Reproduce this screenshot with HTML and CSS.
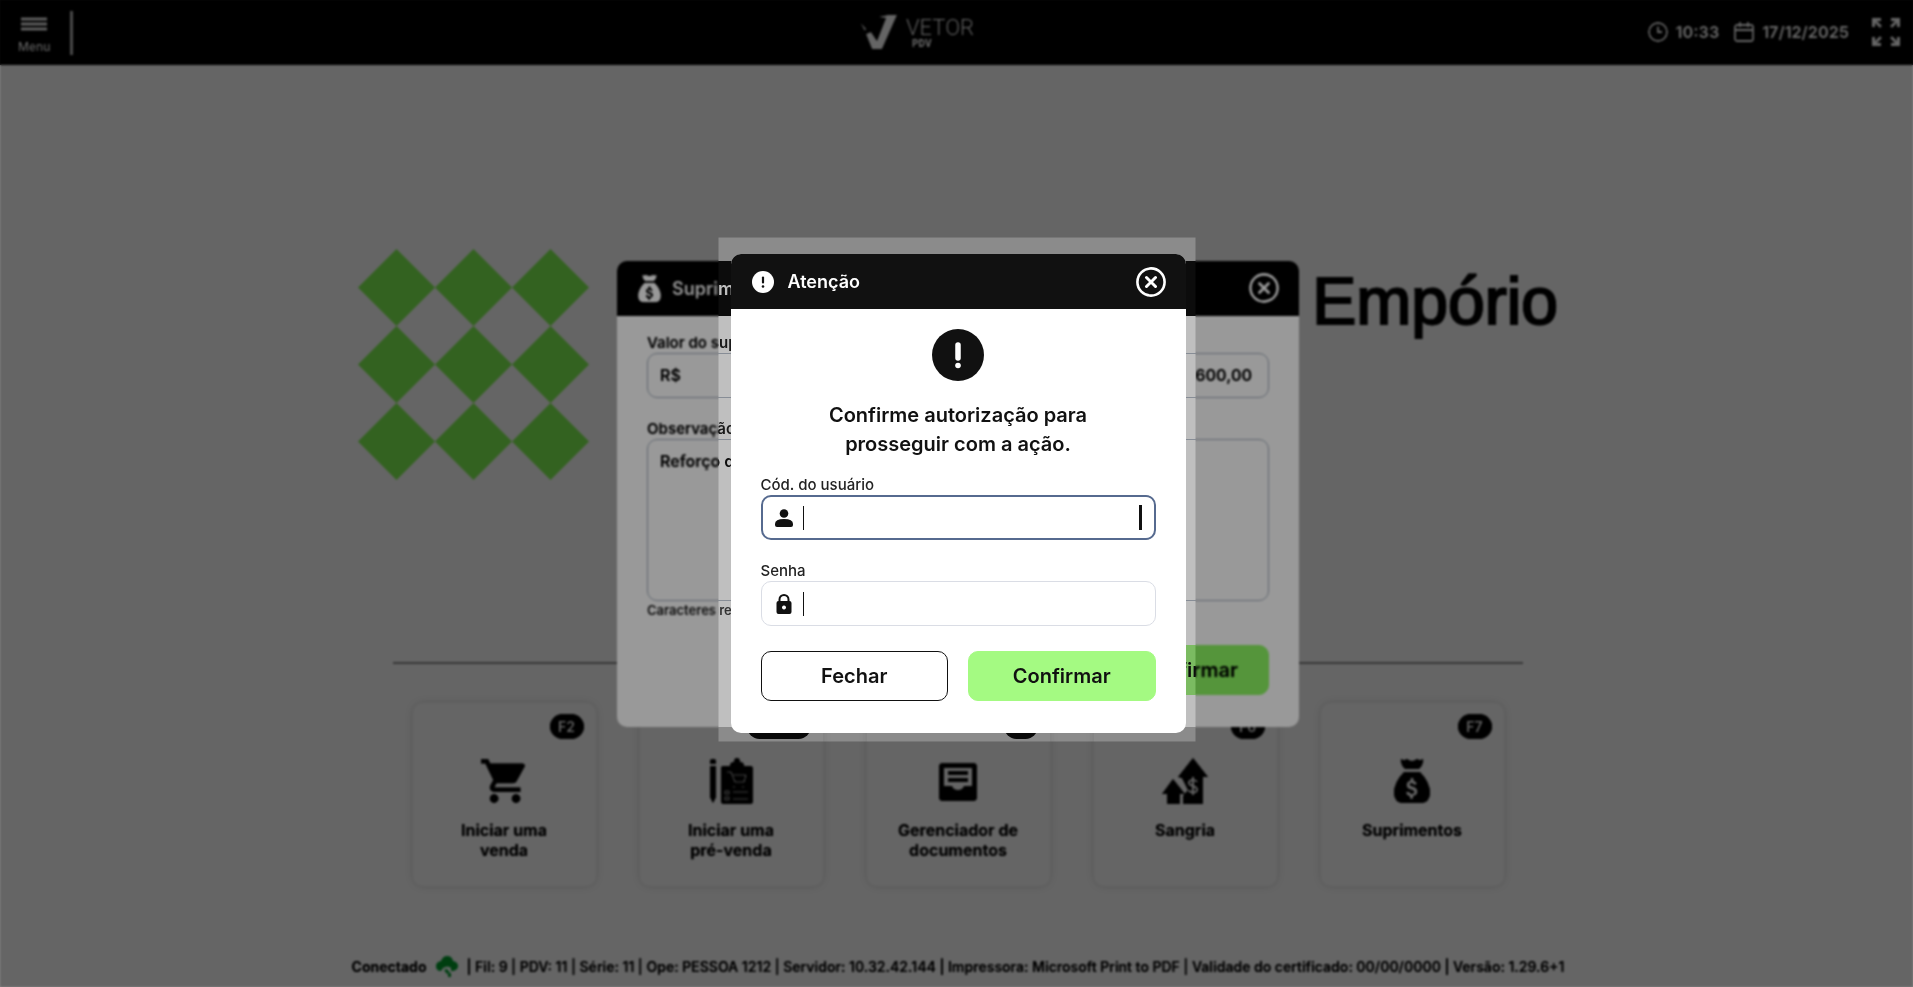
FILE: index.html
```html
<!DOCTYPE html>
<html lang="pt-BR">
<head>
	<meta charset="utf-8">
	<title>Vetor PDV</title>
	<link rel="stylesheet" href="styles.css">
</head>
<body>
	<svg class="sprite" aria-hidden="true">
		<symbol id="money-bag" viewBox="0 0 36 46">
			<path d="M7 1q3 2 6 0 5 4 10 0 3 2 6 0 1 5-4 10H11Q6 6 7 1z"/>
			<path fill-rule="evenodd" d="M10 14h16q10 10 10 21 0 10-10 10H10Q0 45 0 35q0-11 10-21zm6.500 6v2.500q-4 1-4 4.500 0 3.500 5 4.700 3 .8 3 2.300 0 1.800-2.500 1.800-2.600 0-3-2.300l-3 .8q.6 3.300 4 4v2.500h3V38q4.500-.8 4.500-4.500 0-3.600-5-4.900-3-.8-3-2 0-1.400 2-1.400 2.200 0 2.800 1.800l2.800-1q-.9-2.800-3.600-3.500V20z"/>
		</symbol>
		<symbol id="close" viewBox="0 0 30 30">
			<circle cx="15" cy="15" r="13.600" fill="none" stroke="currentColor" stroke-width="2.600"/>
			<path d="M10.500 10.500l9 9m0-9l-9 9" fill="none" stroke="currentColor" stroke-width="3" stroke-linecap="round"/>
		</symbol>
	</svg>

	<header class="topbar">
		<div class="topbar-left">
			<button type="button" class="menu">
				<svg width="28" height="16" viewBox="0 0 28 16"><path d="M1 3h26M1 8h26M1 13h26" stroke="currentColor" stroke-width="3"/></svg>
				Menu
			</button>
			<span class="divider"></span>
		</div>
		<div class="logo">
			<svg width="38" height="36" viewBox="0 0 38 36" fill="currentColor"><path d="M0 8l6 7-1 2zM6 20l5-2 6 9L26 4l-8-1 10-2h9L22 35H12z"/></svg>
			<div class="logo-text">
				<span class="logo-name">VETOR</span>
				<span class="logo-sub">PDV</span>
			</div>
		</div>
		<div class="topbar-right">
			<svg width="20" height="20" viewBox="0 0 20 20" fill="none" stroke="currentColor" stroke-width="1.800"><circle cx="10" cy="10" r="9"/><path d="M10 4.500V10h4"/></svg>
			<time class="clock">10:33</time>
			<svg width="20" height="20" viewBox="0 0 20 20" fill="none" stroke="currentColor" stroke-width="1.800"><rect x="1" y="3" width="18" height="16" rx="2"/><path d="M1 8h18M6 0v5M14 0v5"/></svg>
			<time class="date">17/12/2025</time>
			<button type="button" class="expand" aria-label="Tela cheia">
				<svg width="28" height="28" viewBox="0 0 28 28" fill="none" stroke="currentColor" stroke-width="3"><path d="M1.500 9V1.500H9M2 2l7 7M19 1.500h7.500V9M26 2l-7 7M1.500 19v7.500H9M2 26l7-7M26.500 19v7.500H19M26 26l-7-7"/></svg>
			</button>
		</div>
	</header>

	<main class="home">
		<div class="company">
			<svg class="company-logo" viewBox="0 0 6 6"><path d="M1 0l1 1-1 1-1-1zM3 0l1 1-1 1-1-1zM5 0l1 1-1 1-1-1zM1 2l1 1-1 1-1-1zM3 2l1 1-1 1-1-1zM5 2l1 1-1 1-1-1zM1 4l1 1-1 1-1-1zM3 4l1 1-1 1-1-1zM5 4l1 1-1 1-1-1z"/></svg>
			<h1 class="company-name">Empório</h1>
		</div>
		<hr class="line">
		<nav class="cards">
			<button type="button" class="card">
				<kbd class="key">F2</kbd>
				<svg class="card-icon" width="46" height="46" viewBox="1 2 21 20"><path d="M7 18c-1.100 0-1.990.9-1.990 2S5.900 22 7 22s2-.9 2-2-.9-2-2-2zM1 2v2h2l3.600 7.590-1.350 2.450c-.16.280-.25.610-.25.960 0 1.100.9 2 2 2h12v-2H7.420c-.14 0-.25-.11-.25-.25l.03-.12.9-1.630h7.450c.75 0 1.410-.41 1.750-1.030l3.580-6.490c.08-.14.12-.31.120-.480 0-.55-.45-1-1-1H5.210l-.94-2H1zm16 16c-1.100 0-1.990.9-1.990 2s.89 2 1.990 2 2-.9 2-2-.9-2-2-2z"/></svg>
				<span>Iniciar uma<br>venda</span>
			</button>
			<button type="button" class="card">
				<kbd class="key key-wide">Alt+F2</kbd>
				<svg class="card-icon" width="46" height="46" viewBox="0 0 44 46">
					<path d="M1 6V3q0-2 3-2t3 2v3zM1 8h6v31l-3 6-3-6zM14 8h7q0-4 4-4 0-4 3-4t3 4q4 0 4 4h6q3 0 3 3v32q0 3-3 3H15q-3 0-3-3V11q0-3 2-3z"/>
					<path class="card-icon-cut thin" d="M18 14h4l4 10h9l2-7H24M25 28v2M34 28v2M16 33h4v3h-4zM16 39h4v3h-4zM24 34h15M24 41h15"/>
				</svg>
				<span>Iniciar uma<br>pré-venda</span>
			</button>
			<button type="button" class="card">
				<kbd class="key">F4</kbd>
				<svg class="card-icon" width="38" height="46" viewBox="0 -5 38 46">
					<path fill-rule="evenodd" d="M4 0h30q4 0 4 4v30q0 4-4 4H4q-4 0-4-4V4q0-4 4-4zm1 5v18h8q1 4 6 4t6-4h8V5zM9 8h20v4H9zM9 15h20v4H9z"/>
				</svg>
				<span>Gerenciador de<br>documentos</span>
			</button>
			<button type="button" class="card">
				<kbd class="key">F6</kbd>
				<svg class="card-icon" width="46" height="46" viewBox="0 0 46 46">
					<path d="M31 0l15 19h-5v27H21v-8l5-6-6-12-4-1zM11 21l12 15h-5v10H5V36H0z"/>
					<path class="card-icon-cut" d="M35 24q-1-2-4-2-4 0-4 3 0 2 4 3t4 3.500q0 3-4 3-3 0-4.500-2.500M31 19v18"/>
				</svg>
				<span>Sangria</span>
			</button>
			<button type="button" class="card">
				<kbd class="key">F7</kbd>
				<svg class="card-icon" width="36" height="46"><use href="#money-bag"/></svg>
				<span>Suprimentos</span>
			</button>
		</nav>
	</main>

	<footer class="status">
		<span>Conectado</span>
		<svg width="22" height="22" viewBox="0 0 22 22"><path fill-rule="evenodd" d="M5 16q-5 0-5-5 0-4 5-5 2-5 6-5 5 0 6 5 5 1 5 5t-5 5h-2v-3q-3-3-8 0zM8 15l3-1 3 4-3 1zM12 18h3v4h-3z"/></svg>
		<span>| Fil: 9 | PDV: 11 | Série: 11 | Ope: PESSOA 1212 | Servidor: 10.32.42.144 | Impressora: Microsoft Print to PDF | Validade do certificado: 00/00/0000 | Versão: 1.29.6+1</span>
	</footer>

	<div class="overlay overlay-page">
		<form class="dialog supply">
			<div class="dialog-header">
				<svg class="bag" width="23" height="29"><use href="#money-bag"/></svg>
				<h2>Suprimento</h2>
				<button type="button" class="close" aria-label="Fechar suprimento"><svg width="30" height="30"><use href="#close"/></svg></button>
			</div>
			<div class="dialog-body">
				<label for="amount">Valor do suprimento</label>
				<div class="field money">
					<span>R$</span>
					<input id="amount" type="text" value="600,00">
				</div>
				<label for="note">Observação</label>
				<textarea id="note" class="note">Reforço de caixa</textarea>
				<small class="hint">Caracteres restantes</small>
				<button type="button" class="btn btn-confirm supply-confirm">Confirmar</button>
			</div>
		</form>
	</div>

	<div class="overlay overlay-dialog"></div>
	<div class="overlay overlay-blur"></div>

	<div class="overlay">
		<form class="dialog auth">
			<div class="dialog-header">
				<svg width="22" height="22" viewBox="0 0 22 22"><circle cx="11" cy="11" r="11" fill="#fff"/><path d="M11 6.500v5" stroke="#111" stroke-width="2.200" stroke-linecap="round"/><circle cx="11" cy="15.500" r="1.300" fill="#111"/></svg>
				<h2>Atenção</h2>
				<button type="button" class="close" aria-label="Fechar aviso"><svg width="30" height="30"><use href="#close"/></svg></button>
			</div>
			<div class="dialog-body">
				<svg class="alert" width="52" height="52" viewBox="0 0 52 52"><circle cx="26" cy="26" r="26" fill="#111"/><path d="M26 16v13" stroke="#fff" stroke-width="5.500" stroke-linecap="round"/><circle cx="26" cy="36.500" r="2.800" fill="#fff"/></svg>
				<p class="message">Confirme autorização para prosseguir com a ação.</p>
				<label for="user">Cód. do usuário</label>
				<div class="field focused">
					<svg width="18" height="18" viewBox="0 0 18 18" fill="#111"><circle cx="9" cy="4.500" r="4.300"/><path d="M0 15q0-5 9-5t9 5v1q0 2-2 2H2q-2 0-2-2z"/></svg>
					<span class="bar"></span>
					<input id="user" type="text">
					<span class="caret"></span>
				</div>
				<label for="password">Senha</label>
				<div class="field">
					<svg width="18" height="20" viewBox="0 0 18 20" fill="#111"><path fill-rule="evenodd" d="M3.500 7V5.500a5.500 5.500 0 0 1 11 0V7q2 0 2 2v9q0 2-2 2h-11q-2 0-2-2V9q0-2 2-2zm2 0h7V5.500a3.500 3.500 0 0 0-7 0zM9 11.500a2 2 0 1 0 .01 0z"/></svg>
					<span class="bar"></span>
					<input id="password" type="password">
				</div>
				<div class="actions">
					<button type="button" class="btn">Fechar</button>
					<button type="submit" class="btn btn-confirm">Confirmar</button>
				</div>
			</div>
		</form>
	</div>
</body>
</html>
```
FILE: styles.css
```css
*{
	box-sizing: border-box;
}
body{
	margin: 0;
	min-height: 100vh;
	display: flex;
	flex-direction: column;
	overflow: hidden;
	font-family: Inter, "Liberation Sans", sans-serif;
	font-size: 16px;
	color: #111;
	background: #fff;
}
button, input, textarea{
	font: inherit;
	color: inherit;
	border: none;
	background: none;
	padding: 0;
}
button{
	cursor: pointer;
}
svg{
	display: block;
	flex: none;
}
.sprite{
	position: absolute;
	width: 0;
	height: 0;
}

/* top bar */
.topbar{
	height: 65px;
	display: grid;
	grid-template-columns: 1fr auto 1fr;
	align-items: center;
	padding: 0 13px 2px 18px;
	background: #111;
	color: #fff;
}
.topbar-left, .topbar-right{
	display: flex;
	align-items: center;
}
.topbar-left{
	gap: 20px;
	padding-top: 2px;
}
.menu{
	display: flex;
	flex-direction: column;
	align-items: center;
	gap: 8px;
	padding-top: 4px;
	font-size: 12px;
	line-height: 14px;
	font-weight: 500;
}
.divider{
	width: 3px;
	height: 44px;
	background: #ccc;
}
.logo{
	display: flex;
	gap: 8px;
	width: 198px;
}
.logo-text{
	display: flex;
	flex-direction: column;
	padding-top: 3px;
	font-family: Roboto, sans-serif;
}
.logo-name{
	font-size: 22px;
	line-height: 22px;
	font-weight: 300;
}
.logo-sub{
	padding-left: 6px;
	font-size: 10px;
	line-height: 10px;
	font-weight: 900;
}
.topbar-right{
	justify-content: flex-end;
	gap: 8px;
	font-weight: 700;
}
.clock{
	margin-right: 7px;
}
.expand{
	margin-left: 15px;
}

/* home */
.home{
	flex: 1;
	display: flex;
	flex-direction: column;
	align-items: center;
	padding: 184px 0 0 3px;
}
.company{
	display: flex;
	justify-content: space-between;
	width: 1200px;
	max-width: 100%;
}
.company-logo{
	width: 231px;
	height: 231px;
	fill: #a4fa82;
}
.company-name{
	margin: 12px 0 0;
	font-family: "Liberation Sans", Arial, sans-serif;
	font-size: 66px;
	line-height: 80px;
	font-weight: 400;
	-webkit-text-stroke: 2px #111;
}
.line{
	width: 1130px;
	max-width: 100%;
	height: 2px;
	margin: 182px 0 39px;
	border: none;
	background: #aaa;
}
.cards{
	display: flex;
	gap: 44px;
}
.card{
	position: relative;
	display: flex;
	flex-direction: column;
	align-items: center;
	gap: 16px;
	width: 183px;
	height: 183px;
	padding-top: 55px;
	border-radius: 10px;
	box-shadow: 0 0 10px -1px rgba(0,0,0,.15);
	font-weight: 700;
	line-height: 20px;
}
.card-icon-cut{
	fill: none;
	stroke: #fff;
	stroke-width: 2;
}
.thin{
	stroke-width: 1;
}
.key{
	position: absolute;
	top: 11px;
	right: 12px;
	width: 34px;
	border-radius: 13px;
	background: #111;
	color: #fff;
	font-family: inherit;
	font-size: 14px;
	line-height: 25px;
	font-weight: 600;
}
.key-wide{
	width: 64px;
}
.status{
	display: flex;
	justify-content: center;
	align-items: center;
	gap: 9px;
	height: 42px;
	padding-left: 3px;
	font-size: 14px;
	font-weight: 600;
}
.status svg{
	fill: #35b865;
}
.status span:first-child{
	font-weight: 700;
}

/* overlays */
.overlay{
	position: fixed;
	inset: 0;
	display: flex;
	align-items: center;
	justify-content: center;
	padding-left: 3px;
}
.overlay-page{
	background: rgba(0,0,0,.27);
}
.overlay-dialog{
	background: rgba(0,0,0,.25);
}
/* everything but the frame round the dialog is blurred */
.overlay-blur{
	--left: calc(50% - 238px);
	--right: calc(50% + 239px);
	--top: calc(50% - 256px);
	--bottom: calc(50% + 248px);
	backdrop-filter: brightness(.77) contrast(1.3) blur(1px);
	clip-path: polygon(evenodd, 0 0, 100% 0, 100% 100%, 0 100%, 0 0, var(--left) var(--top), var(--right) var(--top), var(--right) var(--bottom), var(--left) var(--bottom), var(--left) var(--top));
}

/* dialogs */
.dialog{
	display: flex;
	flex-direction: column;
	border-radius: 10px;
	overflow: hidden;
	background: #fff;
}
.dialog-header{
	display: flex;
	align-items: center;
	gap: 14px;
	height: 55px;
	padding: 0 20px 0 21px;
	background: #111;
	color: #fff;
}
.dialog-header h2{
	flex: 1;
	margin: 0;
	font-size: 18px;
	font-weight: 600;
}
.bag{
	fill: #fff;
}
.dialog-body{
	display: flex;
	flex-direction: column;
	padding: 20px 30px 32px;
}
.dialog-body label{
	font-size: 15px;
	line-height: 20px;
	font-weight: 500;
	color: #222;
}
.field{
	display: flex;
	align-items: center;
	height: 45px;
	margin-bottom: 21px;
	padding: 0 14px 0 13px;
	border: 1px solid #dadde5;
	border-radius: 10px;
}
.focused{
	border: 2px solid #566a8f;
	padding: 0 13px 0 12px;
}
.field input{
	flex: 1;
	min-width: 0;
	outline: none;
}
.bar{
	width: 1px;
	height: 24px;
	margin: 0 10px;
	background: #111;
}
.caret{
	width: 3px;
	height: 25px;
	margin-right: -1px;
	background: #111;
}
.btn{
	height: 50px;
	border: 1px solid #111;
	border-radius: 10px;
	font-size: 20px;
	font-weight: 600;
}
.btn-confirm{
	border-color: #a4fa82;
	background: #a4fa82;
}

.supply{
	width: 682px;
}
.supply .dialog-header{
	gap: 11px;
}
.supply .dialog-body{
	padding-top: 17px;
}
.supply .dialog-body label{
	font-weight: 600;
}
.supply .field, .note{
	border: 1px solid #b4bcc8;
	border-radius: 10px;
}
.money{
	padding: 0 16px 0 12px;
	font-weight: 600;
}
.money input{
	text-align: right;
}
.note{
	height: 162px;
	padding: 11px 12px;
	font-weight: 600;
	resize: none;
}
.hint{
	font-size: 13px;
	line-height: 18px;
	font-weight: 600;
	color: #444;
}
.supply-confirm{
	align-self: flex-end;
	width: 160px;
	margin-top: 26px;
}

.auth{
	width: 455px;
}
.alert{
	align-self: center;
}
.message{
	align-self: center;
	max-width: 300px;
	margin: 20px 0 16px;
	font-size: 20px;
	line-height: 29px;
	font-weight: 600;
	text-align: center;
}
.actions{
	display: grid;
	grid-template-columns: 1fr 1fr;
	gap: 20px;
	margin-top: 4px;
}
```
